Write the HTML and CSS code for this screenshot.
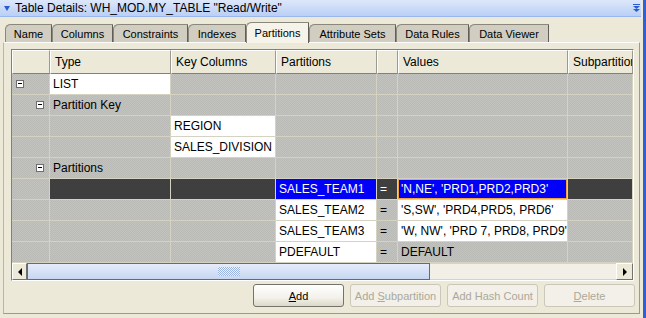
FILE: index.html
```html
<!DOCTYPE html>
<html lang="en">
<head>
    <meta charset="UTF-8">
    <meta name="viewport" content="width=device-width, initial-scale=1.0">
    <title>Table Details</title>
    <link rel="stylesheet" href="styles.css">
</head>
<body>
    <div class="window">
        <div class="titlebar">
            <span class="title-arrow"></span>
            <span class="title-text">Table Details: WH_MOD.MY_TABLE "Read/Write"</span>
            <svg class="collapse-icon" width="7" height="8" viewBox="0 0 7 8">
                <rect x="0" y="0" width="7" height="1" fill="#2a5bd0"/>
                <path d="M0 2 H7 L3.5 5 Z" fill="#2a5bd0"/>
                <path d="M0 5 H7 L3.5 8 Z" fill="#2a5bd0"/>
            </svg>
        </div>

        <div class="tabs">
            <div class="tab" style="width:47px">Name</div>
            <div class="tab" style="width:61px">Columns</div>
            <div class="tab" style="width:75px">Constraints</div>
            <div class="tab" style="width:58px">Indexes</div>
            <div class="tab active" style="width:63px">Partitions</div>
            <div class="tab" style="width:87px">Attribute Sets</div>
            <div class="tab" style="width:73px">Data Rules</div>
            <div class="tab" style="width:80px">Data Viewer</div>
        </div>

        <div class="panel">
            <div class="grid-frame">
                <div class="grid">
                    <!-- header -->
                    <div class="hcell"></div>
                    <div class="hcell">Type</div>
                    <div class="hcell">Key Columns</div>
                    <div class="hcell">Partitions</div>
                    <div class="hcell"></div>
                    <div class="hcell">Values</div>
                    <div class="hcell">Subpartitions</div>

                    <!-- LIST -->
                    <div class="cell lvl1"><span class="toggle"></span></div>
                    <div class="cell white">LIST</div>
                    <div class="cell"></div>
                    <div class="cell"></div>
                    <div class="cell"></div>
                    <div class="cell"></div>
                    <div class="cell"></div>

                    <!-- Partition Key -->
                    <div class="cell lvl2"><span class="toggle"></span></div>
                    <div class="cell">Partition Key</div>
                    <div class="cell"></div>
                    <div class="cell"></div>
                    <div class="cell"></div>
                    <div class="cell"></div>
                    <div class="cell"></div>

                    <div class="cell"></div>
                    <div class="cell"></div>
                    <div class="cell white">REGION</div>
                    <div class="cell"></div>
                    <div class="cell"></div>
                    <div class="cell"></div>
                    <div class="cell"></div>

                    <div class="cell"></div>
                    <div class="cell"></div>
                    <div class="cell white">SALES_DIVISION</div>
                    <div class="cell"></div>
                    <div class="cell"></div>
                    <div class="cell"></div>
                    <div class="cell"></div>

                    <!-- Partitions -->
                    <div class="cell lvl2"><span class="toggle"></span></div>
                    <div class="cell">Partitions</div>
                    <div class="cell"></div>
                    <div class="cell"></div>
                    <div class="cell"></div>
                    <div class="cell"></div>
                    <div class="cell"></div>

                    <div class="cell"></div>
                    <div class="cell dark"></div>
                    <div class="cell dark"></div>
                    <div class="cell picked">SALES_TEAM1</div>
                    <div class="cell dark">=</div>
                    <div class="cell picked focus">'N,NE', 'PRD1,PRD2,PRD3'</div>
                    <div class="cell dark"></div>

                    <div class="cell"></div>
                    <div class="cell"></div>
                    <div class="cell"></div>
                    <div class="cell white">SALES_TEAM2</div>
                    <div class="cell">=</div>
                    <div class="cell white">'S,SW', 'PRD4,PRD5, PRD6'</div>
                    <div class="cell"></div>

                    <div class="cell"></div>
                    <div class="cell"></div>
                    <div class="cell"></div>
                    <div class="cell white">SALES_TEAM3</div>
                    <div class="cell">=</div>
                    <div class="cell white">'W, NW', 'PRD 7, PRD8, PRD9'</div>
                    <div class="cell"></div>

                    <div class="cell"></div>
                    <div class="cell"></div>
                    <div class="cell"></div>
                    <div class="cell white">PDEFAULT</div>
                    <div class="cell">=</div>
                    <div class="cell">DEFAULT</div>
                    <div class="cell"></div>
                </div>

                <div class="hscroll">
                    <div class="scroll-btn left"><span class="arrow-left"></span></div>
                    <div class="thumb"><span class="grip"></span></div>
                    <div class="track"></div>
                    <div class="scroll-btn right"><span class="arrow-right"></span></div>
                </div>
            </div>

            <div class="actions">
                <button class="btn"><u>A</u>dd</button>
                <button class="btn" disabled>Add <u>S</u>ubpartition</button>
                <button class="btn" disabled>Add Hash Count</button>
                <button class="btn" disabled><u>D</u>elete</button>
            </div>
        </div>
    </div>
</body>
</html>
```

FILE: styles.css
```css
:root {
    --beige: #ece9d8;
    --line: #d6d2c2;
    --shade: #808080;
}

* {
    margin: 0;
    padding: 0;
    box-sizing: border-box;
}

body {
    width: 646px;
    height: 318px;
    overflow: hidden;
    background: var(--beige);
    font-family: "Liberation Sans", Arial, sans-serif;
    font-size: 12px;
    color: #000;
}

.window {
    width: 646px;
    height: 318px;
    border-right: 3px solid #2f60d4;
}

/* title bar */
.titlebar {
    height: 17px;
    margin-right: 2px;
    display: flex;
    align-items: center;
    padding-left: 4px;
    background: linear-gradient(#dde7fa, #b9cff5);
    border-bottom: 1px solid #9ab6ee;
}

.title-arrow {
    width: 0;
    height: 0;
    border-left: 3px solid transparent;
    border-right: 3px solid transparent;
    border-top: 5px solid #2a5bd0;
    margin-right: 5px;
}

.title-text {
    font-size: 12px;
    flex: 1;
}

.collapse-icon {
    margin-right: 1px;
}

/* tabs */
.tabs {
    height: 25px;
    display: flex;
    align-items: flex-end;
    padding-left: 5px;
    position: relative;
    z-index: 1;
}

.tab {
    height: 18px;
    display: flex;
    align-items: center;
    justify-content: center;
    font-size: 11px;
    background: #d1cec1;
    border: 1px solid #8a887c;
    border-right-color: #5f5e58;
    border-bottom: none;
    border-top-left-radius: 6px 5px;
    white-space: nowrap;
}

.tab.active {
    height: 21px;
    margin-bottom: -1px;
    background: #f5f3ea;
    padding-bottom: 1px;
}

/* panel */
.panel {
    width: 637px;
    height: 272px;
    margin-left: 3px;
    border: 1px solid #9d9a8c;
    border-top-color: #fdfdfb;
    border-left-color: #b9b6a8;
    padding: 6px 4px 0 7px;
}

.grid-frame {
    width: 623px;
    border: 1px solid var(--shade);
    border-right-color: #fff;
    border-bottom-color: #fff;
}

.grid {
    display: grid;
    grid-template-columns: 38px 121px 105px 101px 21px 170px 65px;
    grid-template-rows: 24px;
    grid-auto-rows: 21px;
}

.hcell {
    background: var(--beige);
    border-top: 1px solid #fff;
    border-left: 1px solid #fff;
    border-right: 1px solid #9a9a94;
    border-bottom: 1px solid var(--shade);
    padding-left: 4px;
    display: flex;
    align-items: center;
    white-space: nowrap;
    overflow: hidden;
}

.cell {
    background: repeating-conic-gradient(#c3c3bf 0 25%, #b9b9b5 0 50%) 0 0 / 2px 2px;
    border-right: 1px solid var(--line);
    border-bottom: 1px solid var(--line);
    padding-left: 3px;
    display: flex;
    align-items: center;
    white-space: nowrap;
    overflow: hidden;
}

.cell.white {
    background: #fff;
}

.cell.dark {
    background: #3f3f3f;
    color: #fff;
}

.cell.picked {
    background: #0000f8;
    color: #fff;
}

.cell.focus {
    box-shadow: inset 0 0 0 1px #f0a33c;
}

.lvl1 {
    padding-left: 4px;
}

.lvl2 {
    padding-left: 24px;
}

.toggle {
    width: 8px;
    height: 8px;
    border: 1px solid #6e6e6e;
    background: #fff;
    position: relative;
}

.toggle::after {
    content: "";
    position: absolute;
    left: 1px;
    top: 2px;
    width: 4px;
    height: 1px;
    background: #000;
}

/* horizontal scrollbar */
.hscroll {
    height: 17px;
    display: flex;
    background: #f1efe6;
}

.scroll-btn {
    display: flex;
    align-items: center;
    justify-content: center;
    background: var(--beige);
    border: 1px solid #fff;
    border-right-color: #717171;
    border-bottom-color: #717171;
}

.scroll-btn.left {
    width: 15px;
}

.scroll-btn.right {
    width: 17px;
}

.arrow-left {
    border-top: 4px solid transparent;
    border-bottom: 4px solid transparent;
    border-right: 4px solid #000;
}

.arrow-right {
    border-top: 4px solid transparent;
    border-bottom: 4px solid transparent;
    border-left: 4px solid #000;
}

.thumb {
    width: 403px;
    display: flex;
    align-items: center;
    justify-content: center;
    background: linear-gradient(#e4ecfa, #c6d7f1);
    border: 1px solid #3a6ed6;
}

.grip {
    width: 22px;
    height: 9px;
    background: repeating-conic-gradient(#9ab2df 0 25%, #eef3fc 0 50%) 0 0 / 2px 2px;
}

.track {
    flex: 1;
    border-top: 1px solid #d6d3c6;
    border-bottom: 1px solid #d6d3c6;
}

/* buttons */
.actions {
    display: flex;
    justify-content: flex-end;
    gap: 6px;
    margin-top: 3px;
}

.btn {
    width: 91px;
    height: 23px;
    font-family: "Liberation Sans", Arial, sans-serif;
    font-size: 11px;
    color: #000;
    background: linear-gradient(#ffffff, #f3f1ea 60%, #dcd8c8);
    border: 1px solid #73726b;
    border-radius: 3px;
}

.btn:disabled {
    color: #aca899;
    background: #f2f0e8;
    border-color: #cac7b8;
}
```
